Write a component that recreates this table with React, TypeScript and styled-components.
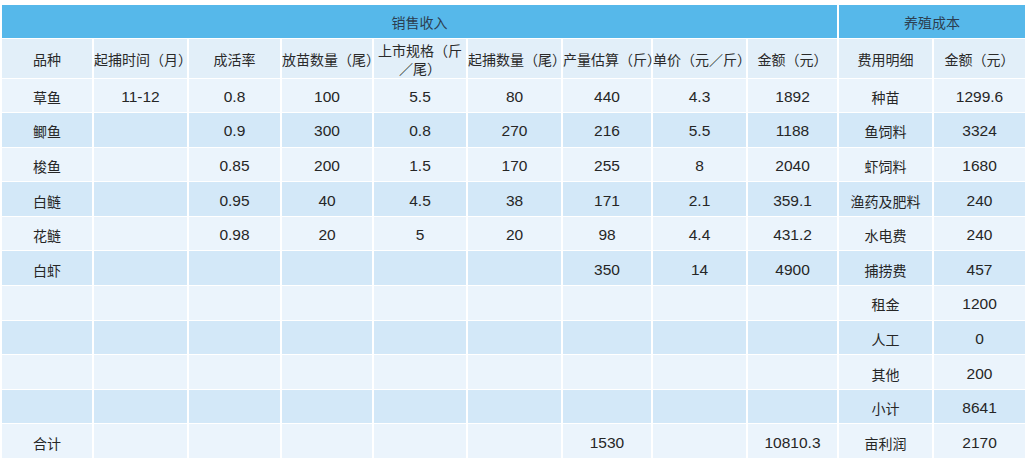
import React from 'react'
import styled, { createGlobalStyle } from 'styled-components'

const GlobalStyle = createGlobalStyle`
  html, body {
    margin: 0;
    padding: 0;
    background: #ffffff;
  }
  body {
    font-family: "Liberation Sans", "Noto Sans CJK SC", sans-serif;
    color: #333333;
  }
`

const colWidths = [91, 95, 93, 92, 94, 95, 90, 95, 91, 95, 92]

const headers = [
  '品种',
  '起捕时间（月）',
  '成活率',
  '放苗数量（尾）',
  '上市规格（斤\n／尾）',
  '起捕数量（尾）',
  '产量估算（斤）',
  '单价（元／斤）',
  '金额（元）',
  '费用明细',
  '金额（元）',
]

const rows: string[][] = [
  ['草鱼', '11-12', '0.8', '100', '5.5', '80', '440', '4.3', '1892', '种苗', '1299.6'],
  ['鲫鱼', '', '0.9', '300', '0.8', '270', '216', '5.5', '1188', '鱼饲料', '3324'],
  ['梭鱼', '', '0.85', '200', '1.5', '170', '255', '8', '2040', '虾饲料', '1680'],
  ['白鲢', '', '0.95', '40', '4.5', '38', '171', '2.1', '359.1', '渔药及肥料', '240'],
  ['花鲢', '', '0.98', '20', '5', '20', '98', '4.4', '431.2', '水电费', '240'],
  ['白虾', '', '', '', '', '', '350', '14', '4900', '捕捞费', '457'],
  ['', '', '', '', '', '', '', '', '', '租金', '1200'],
  ['', '', '', '', '', '', '', '', '', '人工', '0'],
  ['', '', '', '', '', '', '', '', '', '其他', '200'],
  ['', '', '', '', '', '', '', '', '', '小计', '8641'],
  ['合计', '', '', '', '', '', '1530', '', '10810.3', '亩利润', '2170'],
]

const Page = styled.div`
  padding: 5px 2px 5px 2px;
`

const Table = styled.table`
  width: 1023px;
  table-layout: fixed;
  border-collapse: collapse;
  border-spacing: 0;
`

const BandRow = styled.tr`
  height: 33px;
`

const BandCell = styled.th`
  background: #56b8ea;
  color: #2c3e50;
  font-size: 14px;
  font-weight: normal;
  text-align: center;
  padding: 2px 0 0;
  border-left: 2px solid #ffffff;
  border-bottom: 1px solid #ffffff;
  &:first-child {
    border-left: none;
  }
`

const HeadRow = styled.tr`
  height: 40px;
  background: #e2eff9;
`

const HeadCell = styled.th`
  font-size: 14px;
  font-weight: normal;
  line-height: 18px;
  text-align: center;
  padding: 3px 0 0;
  white-space: pre;
  color: #2a2a2a;
  border-left: 2px solid #ffffff;
  border-bottom: 1px solid #ffffff;
  &:first-child {
    border-left: none;
  }
`

const BodyRow = styled.tr<{ $dark: boolean }>`
  height: 34.6px;
  background: ${(p) => (p.$dark ? '#d3e8f8' : '#ebf4fc')};
`

const Cell = styled.td<{ $cjk: boolean }>`
  font-size: ${(p) => (p.$cjk ? '14px' : '15.5px')};
  text-align: center;
  padding: 3px 0 0;
  white-space: nowrap;
  color: #262626;
  border-left: 2px solid #ffffff;
  border-bottom: 1px solid #ffffff;
  &:first-child {
    border-left: none;
  }
`

const isCjk = (s: string) => /[\u4e00-\u9fff]/.test(s)

export default function App() {
  return (
    <Page>
      <GlobalStyle />
      <Table>
        <colgroup>
          {colWidths.map((w, i) => (
            <col key={i} style={{ width: w }} />
          ))}
        </colgroup>
        <thead>
          <BandRow>
            <BandCell colSpan={9}>销售收入</BandCell>
            <BandCell colSpan={2}>养殖成本</BandCell>
          </BandRow>
          <HeadRow>
            {headers.map((h, i) => (
              <HeadCell key={i}>{h}</HeadCell>
            ))}
          </HeadRow>
        </thead>
        <tbody>
          {rows.map((r, i) => (
            <BodyRow key={i} $dark={i % 2 === 1}>
              {r.map((c, j) => (
                <Cell key={j} $cjk={isCjk(c)}>
                  {c}
                </Cell>
              ))}
            </BodyRow>
          ))}
        </tbody>
      </Table>
    </Page>
  )
}
